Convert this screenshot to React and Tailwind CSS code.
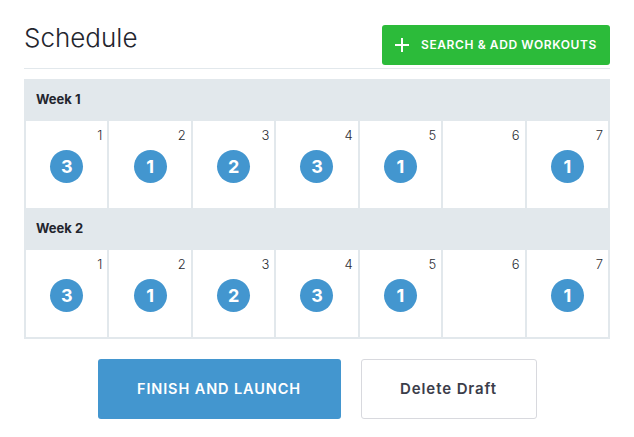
import React from "react";

const weeks = [
  { label: "Week 1", counts: [3, 1, 2, 3, 1, null, 1] },
  { label: "Week 2", counts: [3, 1, 2, 3, 1, null, 1] },
];

function Cell({ day, count }) {
  return (
    <div className="relative h-[87px] bg-white">
      <span className="absolute right-[5px] top-[6px] text-[13px] font-light leading-[16px] text-[#2a2c33]">
        {day}
      </span>
      {count !== null && (
        <div className="flex justify-center pt-[29px]">
          <div className="flex h-[33px] w-[33px] items-center justify-center rounded-full bg-[#4396cf] text-[18px] font-bold text-white">
            {count}
          </div>
        </div>
      )}
    </div>
  );
}

export default function App() {
  return (
    <div
      className="min-h-[437px] w-[634px] bg-white px-[24px] pt-[21px] text-[#23252e]"
      style={{ fontFamily: "Inter, 'Noto Sans', sans-serif" }}
    >
      <div className="flex items-start justify-between">
        <h1 className="text-[26px] font-light leading-[33px] text-[#23252e]">Schedule</h1>
        <button className="mt-[4px] flex h-[40px] w-[228px] items-center rounded-[3px] bg-[#2cbb3a] pl-[13px] text-white">
          <svg width="14" height="14" viewBox="0 0 14 14" className="shrink-0">
            <path d="M7 0v14M0 7h14" stroke="white" strokeWidth="2" />
          </svg>
          <span className="ml-[12px] text-[12px] font-semibold tracking-[0.6px]">SEARCH &amp; ADD WORKOUTS</span>
        </button>
      </div>
      <div className="mt-[3px] border-b border-[#e2e8ec]" />
      <div className="mt-[10px] bg-[#e2e8ec] px-[2px] pb-[2px]">
        {weeks.map((w) => (
          <div key={w.label}>
            <div className="flex h-[42px] items-center pl-[10px] text-[13px] font-bold text-[#23252e]">
              {w.label}
            </div>
            <div className="grid grid-cols-7 gap-[2px]">
              {w.counts.map((c, i) => (
                <Cell key={i} day={i + 1} count={c} />
              ))}
            </div>
          </div>
        ))}
      </div>
      <div className="mt-[20px] flex justify-center gap-[20px]">
        <button className="h-[60px] w-[243px] rounded-[3px] bg-[#4396cf] text-[14.5px] font-semibold tracking-[0.9px] text-white">
          FINISH AND LAUNCH
        </button>
        <button className="h-[60px] w-[176px] rounded-[3px] border border-[#d8d9de] bg-white text-[15px] font-semibold tracking-[0.9px] text-[#3b3d4a]">
          Delete Draft
        </button>
      </div>
    </div>
  );
}
